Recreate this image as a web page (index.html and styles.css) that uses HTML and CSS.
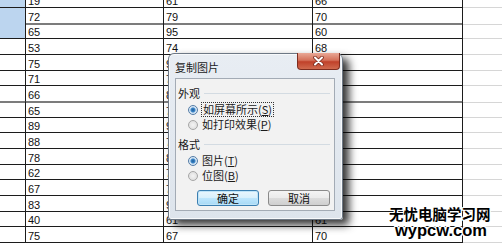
FILE: index.html
```html
<!DOCTYPE html>
<html lang="zh-CN">

<head>
    <meta charset="UTF-8">
    <meta name="viewport" content="width=device-width, initial-scale=1.0">
    <title>复制图片</title>
    <link rel="stylesheet" href="styles.css">
</head>

<body>

    <div class="sheet">
        <div class="row"><span class="c0 sel"></span><span class="c">19</span><span class="c">61</span><span class="c">66</span><span class="c4"></span></div>
        <div class="row thick"><span class="c0 sel"></span><span class="c">72</span><span class="c">79</span><span class="c">70</span><span class="c4"></span></div>
        <div class="row"><span class="c0 sel"></span><span class="c">65</span><span class="c">95</span><span class="c">60</span><span class="c4"></span></div>
        <div class="row"><span class="c0"></span><span class="c">53</span><span class="c">74</span><span class="c">68</span><span class="c4"></span></div>
        <div class="row"><span class="c0"></span><span class="c">75</span><span class="c">92</span><span class="c">82</span><span class="c4"></span></div>
        <div class="row"><span class="c0"></span><span class="c">71</span><span class="c">76</span><span class="c">74</span><span class="c4"></span></div>
        <div class="row thick"><span class="c0"></span><span class="c">66</span><span class="c">85</span><span class="c">69</span><span class="c4"></span></div>
        <div class="row"><span class="c0"></span><span class="c">65</span><span class="c">73</span><span class="c">77</span><span class="c4"></span></div>
        <div class="row"><span class="c0"></span><span class="c">89</span><span class="c">94</span><span class="c">88</span><span class="c4"></span></div>
        <div class="row"><span class="c0"></span><span class="c">88</span><span class="c">77</span><span class="c">65</span><span class="c4"></span></div>
        <div class="row"><span class="c0"></span><span class="c">78</span><span class="c">86</span><span class="c">72</span><span class="c4"></span></div>
        <div class="row"><span class="c0"></span><span class="c">62</span><span class="c">71</span><span class="c">80</span><span class="c4"></span></div>
        <div class="row"><span class="c0"></span><span class="c">67</span><span class="c">75</span><span class="c">79</span><span class="c4"></span></div>
        <div class="row"><span class="c0"></span><span class="c">83</span><span class="c">90</span><span class="c">64</span><span class="c4"></span></div>
        <div class="row"><span class="c0"></span><span class="c">40</span><span class="c">61</span><span class="c">61</span><span class="c4"></span></div>
        <div class="row"><span class="c0"></span><span class="c">75</span><span class="c">67</span><span class="c">70</span><span class="c4"></span></div>
    </div>

    <!-- 复制图片 对话框 -->
    <div class="dialog">
        <div class="titlebar">
            <span class="title">复制图片</span>
            <div class="close">
                <svg width="13" height="10" viewBox="0 0 13 10">
                    <path d="M3 1.5 L10 8.5 M10 1.5 L3 8.5" stroke="#7a2a1c" stroke-width="3.6" stroke-linecap="round" />
                    <path d="M3 1.5 L10 8.5 M10 1.5 L3 8.5" stroke="#fff" stroke-width="2" stroke-linecap="round" />
                </svg>
            </div>
        </div>

        <div class="client">
            <div class="group">外观<i></i></div>
            <div class="opt"><span class="radio on"></span><span class="focus">如屏幕所示(<u>S</u>)</span></div>
            <div class="opt"><span class="radio"></span><span class="lbl">如打印效果(<u>P</u>)</span></div>

            <div class="group second">格式<i></i></div>
            <div class="opt"><span class="radio on"></span><span class="lbl">图片(<u>T</u>)</span></div>
            <div class="opt"><span class="radio"></span><span class="lbl">位图(<u>B</u>)</span></div>

            <div class="buttons">
                <div class="btn default">确定</div>
                <div class="btn">取消</div>
            </div>
        </div>
    </div>

    <div class="mark">
        <div class="mark-cn">无忧电脑学习网</div>
        <div class="mark-en">wypcw.com</div>
    </div>

</body>

</html>
```

FILE: styles.css
```css
* {
    margin: 0;
    padding: 0;
    box-sizing: border-box;
}

body {
    width: 502px;
    height: 244px;
    overflow: hidden;
    position: relative;
    background: #fff;
    font-family: "Liberation Sans", "Noto Sans CJK SC", sans-serif;
    color: #111;
}

/* 表格 */
.sheet {
    margin-top: -8px;
}

.row {
    display: grid;
    grid-template-columns: 26px 138px 149px 150px 1fr;
    height: 15.66px;
}

.row span {
    border-bottom: 1px solid #1c1c1c;
    border-right: 1px solid #1c1c1c;
    font-size: 11px;
    line-height: 12px;
    padding: 3px 0 0 2px;
}

.row.thick span {
    border-bottom: 2px solid #7c7c7c;
}

.row .c0.sel {
    background: #bcd5ef;
}

.row .c4,
.row.thick .c4 {
    border-right: none;
    border-bottom: 1px solid #d6d6d6;
}

/* 对话框 */
.dialog {
    position: absolute;
    left: 168px;
    top: 53px;
    width: 175px;
    height: 167px;
    display: flex;
    flex-direction: column;
    background: linear-gradient(#e8edf3, #dde4ec);
    border: 1px solid #6d7885;
    border-radius: 6px 6px 3px 3px;
    box-shadow: 6px 5px 9px rgba(0, 0, 0, .8), inset 0 0 0 1px #f7f9fb;
    font-family: "Noto Sans CJK SC", sans-serif;
    font-size: 11px;
}

.titlebar {
    height: 24px;
    display: flex;
    justify-content: space-between;
    align-items: flex-start;
    padding-left: 6px;
}

.title {
    line-height: 14px;
    margin-top: 6px;
    color: #1a1a1a;
}

.close {
    width: 43px;
    height: 17px;
    margin: -1px 2px 0 0;
    display: flex;
    align-items: center;
    justify-content: center;
    border: 1px solid #7e2d1f;
    border-top: none;
    border-radius: 0 0 4px 4px;
    background: linear-gradient(#e9a896, #d4715a 45%, #c0412a 55%, #d06a4e);
}

.client {
    flex: 1;
    margin: 0 7px 8px 6px;
    padding: 7px 4px 0 2px;
    background: #f2f2f2;
    border: 1px solid #a3abb5;
    display: flex;
    flex-direction: column;
}

.group {
    display: flex;
    align-items: center;
    line-height: 14px;
    height: 14px;
    color: #1a1a1a;
}

.group i {
    flex: 1;
    height: 1px;
    margin: 1px 0 0 4px;
    background: #d3dbe2;
}

.group.second {
    margin-top: 5px;
}

.opt {
    display: flex;
    align-items: center;
    height: 15px;
    padding-left: 10px;
}

.group + .opt {
    margin-top: 2px;
}

.radio {
    width: 10px;
    height: 10px;
    border-radius: 50%;
    border: 1px solid #a6a6a6;
    background: radial-gradient(#f4f4f4, #d9d9d9);
    margin-right: 3px;
    flex: none;
}

.radio.on {
    border-color: #557ca6;
    background: radial-gradient(circle, #1f5d9a 0, #3c86c8 2px, #cfe2f3 3px, #e9f1f8 5px);
}

.lbl,
.focus {
    line-height: 13px;
    padding: 0 1px;
    color: #1a1a1a;
}

.focus {
    border: 1px dotted #333;
}

.buttons {
    display: flex;
    justify-content: flex-end;
    gap: 9px;
    margin-top: 7px;
}

.btn {
    width: 62px;
    height: 16px;
    line-height: 14px;
    text-align: center;
    border: 1px solid #8a8a8a;
    border-radius: 3px;
    background: linear-gradient(#f4f4f4, #ebebeb 50%, #dcdcdc 51%, #cfcfcf);
    color: #111;
}

.btn.default {
    border-color: #3c7fb1;
    background: linear-gradient(#eaf6fd, #d9f0fc 50%, #bee6fd 51%, #a7d9f5);
    box-shadow: inset 0 0 0 1px #bfe4f8;
}

/* 水印 */
.mark {
    position: absolute;
    left: 389px;
    top: 206px;
    font-weight: bold;
    color: #000;
    text-shadow: 1px 0 #fff, -1px 0 #fff, 0 1px #fff, 0 -1px #fff, 1px 1px #fff, -1px -1px #fff, 1px -1px #fff, -1px 1px #fff;
}

.mark-cn {
    font-family: "Noto Sans CJK SC", sans-serif;
    font-size: 14.5px;
    line-height: 16px;
}

.mark-en {
    font-family: "Liberation Sans", sans-serif;
    font-size: 16.5px;
    line-height: 14px;
    margin: 1px 0 0 6px;
}
```
